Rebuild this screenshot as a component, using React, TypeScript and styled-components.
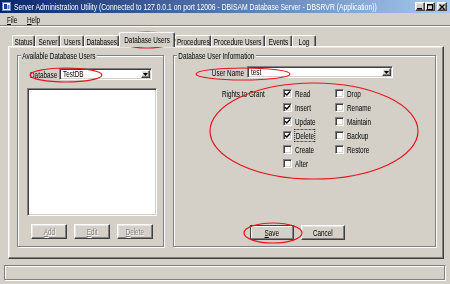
import React from 'react';
import styled, { createGlobalStyle, css } from 'styled-components';

const GlobalStyle = createGlobalStyle`
  html, body {
    margin: 0;
    padding: 0;
    background: #d4d0c8;
  }
  body {
    font-family: "Liberation Sans", Arial, sans-serif;
    font-size: 9.5px;
    color: #000;
  }
  * {
    box-sizing: border-box;
  }
`;

// the original dialog font is a narrow one, so text is squeezed to its width
const T = styled.span<{ $o?: 'left' | 'center' | 'right' }>`
  display: inline-block;
  white-space: nowrap;
  transform: scaleX(0.67);
  transform-origin: ${p => p.$o || 'left'} center;
`;

const raised = css`
  border-top: 1px solid #fff;
  border-left: 1px solid #fff;
  border-right: 1px solid #404040;
  border-bottom: 1px solid #404040;
  box-shadow: inset -1px -1px #808080, inset 1px 1px #e8e6e1;
`;

const sunken = css`
  border-top: 1px solid #808080;
  border-left: 1px solid #808080;
  border-right: 1px solid #fff;
  border-bottom: 1px solid #fff;
  box-shadow: inset 1px 1px #404040, inset -1px -1px #d4d0c8;
`;

const Window = styled.div`
  position: relative;
  width: 450px;
  height: 284px;
  overflow: hidden;
  display: flex;
  flex-direction: column;
  background: #d4d0c8;
`;

const TitleBar = styled.div`
  height: 13px;
  display: flex;
  align-items: center;
  padding: 0 3px 0 2px;
  background: linear-gradient(to right, #0a246a, #a6caf0);
  color: #fff;
  white-space: nowrap;

  & > svg {
    flex: none;
  }
`;

const TitleText = styled.div`
  flex: 1 1 0;
  min-width: 0;
  margin-left: 3px;

  & > span {
    display: inline-block;
    font-size: 9.5px;
    transform: scaleX(0.715);
    transform-origin: left center;
  }
`;

const WinButtons = styled.div`
  flex: none;
  display: flex;
`;

const WinButton = styled.div<{ $gap?: boolean }>`
  ${raised};
  width: 10px;
  height: 9px;
  margin-left: ${p => (p.$gap ? '2px' : '0')};
  background: #d4d0c8;
  display: grid;
  place-items: center;
`;

const MenuBar = styled.div`
  height: 13px;
  display: flex;
  align-items: center;
  gap: 9px;
  padding-left: 7px;
  border-bottom: 1px solid #808080;
  box-shadow: 0 1px #fff;

  & > span {
    width: 11px;
  }
`;

const Body = styled.div`
  margin: 0 6px 0 8px;
`;

const TabStrip = styled.div`
  height: 20px;
  display: flex;
  align-items: flex-end;
  padding-left: 4px;
`;

const Tab = styled.div<{ $w: number; $active?: boolean }>`
  width: ${p => p.$w}px;
  height: ${p => (p.$active ? 15 : 11)}px;
  display: flex;
  align-items: center;
  justify-content: center;
  border-top: 1px solid #fff;
  border-left: 1px solid #fff;
  border-right: 1px solid #404040;
  box-shadow: inset -1px 0 #808080;
  border-radius: 2px 2px 0 0;
  background: #d4d0c8;
  position: relative;
  z-index: ${p => (p.$active ? 1 : 0)};
  margin-bottom: ${p => (p.$active ? '-1px' : '0')};
  padding-bottom: ${p => (p.$active ? '2px' : '0')};
`;

const Panel = styled.div`
  ${raised};
  height: 213px;
  display: flex;
  gap: 9px;
  padding: 8px 7px 9px 8px;
`;

const Group = styled.div<{ $w?: number }>`
  position: relative;
  ${p => (p.$w ? `width: ${p.$w}px;` : 'flex: 1;')}
  height: 192px;
  border: 1px solid #808080;
  box-shadow: inset 1px 1px #fff, 1px 1px #fff;
  display: flex;
  flex-direction: column;
`;

const Legend = styled.span`
  position: absolute;
  top: -6px;
  left: 3px;
  padding: 0 2px;
  line-height: 11px;
  background: #d4d0c8;
  white-space: nowrap;
  transform: scaleX(0.67);
  transform-origin: left center;
`;

const LeftBody = styled.div`
  padding: 12px 0 0 9px;
  display: flex;
  flex-direction: column;
`;

const FieldRow = styled.div<{ $labelW: number; $align?: 'left' | 'right' }>`
  display: flex;
  align-items: center;
  height: 12px;
  margin-left: ${p => (p.$align === 'right' ? 0 : 3)}px;

  & > label {
    flex: none;
    width: ${p => p.$labelW}px;
    text-align: ${p => p.$align || 'left'};
    padding-right: ${p => (p.$align === 'right' ? 3 : 2)}px;
  }
`;

const Combo = styled.div<{ $w: number }>`
  ${sunken};
  flex: none;
  width: ${p => p.$w}px;
  height: 12px;
  background: #fff;
  display: flex;
  align-items: center;
  padding: 0 1px 0 3px;
`;

const ComboText = styled.span`
  flex: 1;
  line-height: 10px;
`;

const DropButton = styled.div`
  ${raised};
  width: 9px;
  height: 8px;
  background: #d4d0c8;
  display: grid;
  place-items: center;
`;

const ListBox = styled.div`
  ${sunken};
  margin-top: 8px;
  width: 130px;
  height: 128px;
  background: #fff;
`;

const ButtonRow = styled.div<{ $pad: number; $gap: number }>`
  display: flex;
  gap: ${p => p.$gap}px;
  padding-left: ${p => p.$pad}px;
`;

const LeftButtons = styled(ButtonRow)`
  margin-top: 8px;
`;

const Button = styled.div<{ $w: number; $disabled?: boolean; $default?: boolean }>`
  width: ${p => p.$w}px;
  height: 15px;
  display: flex;
  align-items: center;
  justify-content: center;
  background: #d4d0c8;
  border-top: 1px solid ${p => (p.$default ? '#404040' : '#fff')};
  border-left: 1px solid ${p => (p.$default ? '#404040' : '#fff')};
  border-right: 1px solid #404040;
  border-bottom: 1px solid #404040;
  box-shadow: ${p =>
    p.$default
      ? 'inset -1px -1px #808080, inset 1px 1px #fff'
      : 'inset -1px -1px #808080, inset 1px 1px #e8e6e1'};
  color: ${p => (p.$disabled ? '#808080' : '#000')};
  text-shadow: ${p => (p.$disabled ? '1px 1px #fff' : 'none')};
`;

const RightBody = styled.div`
  flex: 1;
  padding-top: 10px;
  display: flex;
  flex-direction: column;
`;

const Rights = styled.div`
  margin-top: 8px;
  padding-left: 48px;
  display: grid;
  grid-template-columns: 61px 52px auto;
  grid-auto-rows: 14px;
  align-items: center;
`;

const CheckItem = styled.div`
  display: flex;
  align-items: center;
  gap: 3px;
`;

const Box = styled.div`
  ${sunken};
  flex: none;
  width: 9px;
  height: 9px;
  background: #fff;
  display: grid;
  place-items: center;
`;

const Focus = styled(T)`
  outline: 1px dotted #000;
  padding: 0 1px;
`;

const RightButtons = styled(ButtonRow)`
  margin-top: auto;
  margin-bottom: 6px;
`;

const StatusBar = styled.div`
  margin: 6px 4px 0 4px;
  height: 16px;
  border-top: 1px solid #808080;
  border-left: 1px solid #808080;
  border-right: 1px solid #fff;
  border-bottom: 1px solid #fff;
  box-shadow: inset -1px -1px #808080, inset 1px 1px #fff;
`;

const Overlay = styled.svg`
  position: absolute;
  left: 0;
  top: 0;
  pointer-events: none;
`;

const Down = () => (
  <svg width="5" height="3" viewBox="0 0 5 3">
    <polygon points="0,0 5,0 2.5,3" fill="#000" />
  </svg>
);

const Check = () => (
  <svg width="7" height="7" viewBox="0 0 7 7">
    <path d="M1 3.2 L2.8 5 L6 1.5" stroke="#000" strokeWidth="1.4" fill="none" />
  </svg>
);

const tabs = [
  { label: 'Status', w: 23 },
  { label: 'Server', w: 25 },
  { label: 'Users', w: 24 },
  { label: 'Databases', w: 35 },
  { label: 'Database Users', w: 56, active: true },
  { label: 'Procedures', w: 36 },
  { label: 'Procedure Users', w: 54 },
  { label: 'Events', w: 27 },
  { label: 'Log', w: 24 },
];

const rights: [string, boolean, string | null][] = [
  ['Read', true, 'Drop'],
  ['Insert', true, 'Rename'],
  ['Update', true, 'Maintain'],
  ['Delete', true, 'Backup'],
  ['Create', false, 'Restore'],
  ['Alter', false, null],
];

const CheckBox: React.FC<{ label: string; checked?: boolean; focused?: boolean }> = ({
  label,
  checked,
  focused,
}) => (
  <CheckItem>
    <Box>{checked && <Check />}</Box>
    {focused ? <Focus>{label}</Focus> : <T>{label}</T>}
  </CheckItem>
);

const App: React.FC = () => {
  return (
    <Window>
      <GlobalStyle />
      <TitleBar>
        <svg width="9" height="9" viewBox="0 0 9 9">
          <rect x="0.5" y="0.5" width="8" height="8" fill="#fff" stroke="#6c8cc8" />
          <rect x="2" y="2" width="3" height="5" fill="#1d3f9a" />
          <rect x="5.5" y="3" width="2" height="4" fill="#5b7fd0" />
        </svg>
        <TitleText>
          <span>
            Server Administration Utility (Connected to 127.0.0.1 on port 12006 - DBISAM
            Database Server - DBSRVR (Application))
          </span>
        </TitleText>
        <WinButtons>
          <WinButton>
            <svg width="6" height="6" viewBox="0 0 6 6">
              <rect x="0" y="4" width="5" height="1.5" fill="#000" />
            </svg>
          </WinButton>
          <WinButton>
            <svg width="6" height="6" viewBox="0 0 6 6">
              <rect x="0.5" y="0.5" width="5" height="5" fill="none" stroke="#000" />
              <rect x="0" y="0" width="6" height="1.5" fill="#000" />
            </svg>
          </WinButton>
          <WinButton $gap>
            <svg width="6" height="6" viewBox="0 0 6 6">
              <path d="M0.5 0.5 L5.5 5.5 M5.5 0.5 L0.5 5.5" stroke="#000" strokeWidth="1.3" />
            </svg>
          </WinButton>
        </WinButtons>
      </TitleBar>

      <MenuBar>
        <span>
          <T>
            <u>F</u>ile
          </T>
        </span>
        <span>
          <T>
            <u>H</u>elp
          </T>
        </span>
      </MenuBar>

      <Body>
        <TabStrip>
          {tabs.map(t => (
            <Tab key={t.label} $w={t.w} $active={t.active}>
              <T $o="center">{t.label}</T>
            </Tab>
          ))}
        </TabStrip>

        <Panel>
          <Group $w={147}>
            <Legend>Available Database Users</Legend>
            <LeftBody>
              <FieldRow $labelW={29}>
                <label>
                  <T>Database</T>
                </label>
                <Combo $w={93}>
                  <ComboText>
                    <T>TestDB</T>
                  </ComboText>
                  <DropButton>
                    <Down />
                  </DropButton>
                </Combo>
              </FieldRow>
              <ListBox />
              <LeftButtons $pad={4} $gap={7}>
                <Button $w={36} $disabled>
                  <T $o="center">
                    <u>A</u>dd
                  </T>
                </Button>
                <Button $w={36} $disabled>
                  <T $o="center">
                    <u>E</u>dit
                  </T>
                </Button>
                <Button $w={36} $disabled>
                  <T $o="center">
                    <u>D</u>elete
                  </T>
                </Button>
              </LeftButtons>
            </LeftBody>
          </Group>

          <Group>
            <Legend>Database User Information</Legend>
            <RightBody>
              <FieldRow $labelW={73} $align="right">
                <label>
                  <T $o="right">User Name</T>
                </label>
                <Combo $w={146}>
                  <ComboText>
                    <T>test</T>
                  </ComboText>
                  <DropButton>
                    <Down />
                  </DropButton>
                </Combo>
              </FieldRow>

              <Rights>
                {rights.map(([a, on, b], i) => (
                  <React.Fragment key={a}>
                    <span>{i === 0 ? <T>Rights to Grant</T> : ''}</span>
                    <CheckBox label={a} checked={on} focused={a === 'Delete'} />
                    {b ? <CheckBox label={b} /> : <span />}
                  </React.Fragment>
                ))}
              </Rights>

              <RightButtons $pad={76} $gap={7}>
                <Button $w={44} $default>
                  <T $o="center">
                    <u>S</u>ave
                  </T>
                </Button>
                <Button $w={44}>
                  <T $o="center">Cancel</T>
                </Button>
              </RightButtons>
            </RightBody>
          </Group>
        </Panel>
      </Body>

      <StatusBar />

      <Overlay width="450" height="284" viewBox="0 0 450 284">
        <g fill="none" stroke="#e8141c" strokeWidth="1.2">
          <ellipse cx="147" cy="40" rx="28" ry="8" />
          <ellipse cx="66" cy="75" rx="36" ry="7" />
          <ellipse cx="243" cy="74" rx="47" ry="6" />
          <ellipse cx="314" cy="131" rx="104" ry="48" />
          <ellipse cx="273" cy="233" rx="29" ry="10" />
        </g>
      </Overlay>
    </Window>
  );
};

export default App;
